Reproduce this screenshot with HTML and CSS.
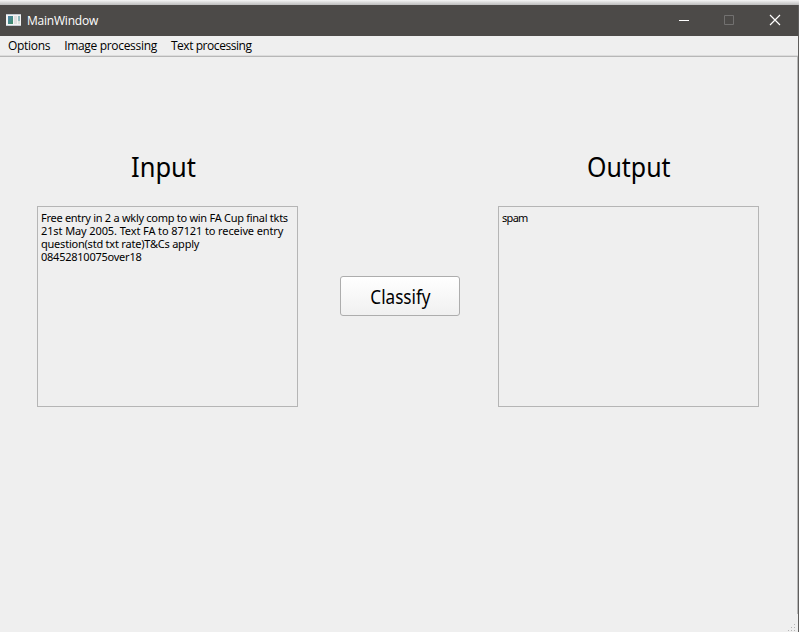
FILE: index.html
```html
<!DOCTYPE html>
<html lang="en">
<head>
<meta charset="utf-8">
<title>MainWindow</title>
<link rel="stylesheet" href="styles.css">
</head>
<body>
<div class="shadow"></div>
<div class="window">
  <header class="titlebar">
    <svg class="app-icon" width="15" height="12" viewBox="0 0 15 12">
      <defs><linearGradient id="g" x1="0" y1="0" x2="1" y2="1"><stop offset="0" stop-color="#4e86b0"/><stop offset="1" stop-color="#3d8c62"/></linearGradient></defs>
      <path fill="#f4f4f4" d="M0 0h15v12H0z"/>
      <path fill="#c3cbd2" d="M0 0h15v1H0zM0 11h15v1H0z"/>
      <path fill="url(#g)" d="M2 2h5v8H2z"/>
      <path fill="#e0e0e0" d="M8 2h3v8H8z"/>
      <path fill="#8fb9bd" d="M12 2h2v5h-2z"/>
      <path fill="#dce3dd" d="M12 7h2v3h-2z"/>
    </svg>
    <h1 class="title">MainWindow</h1>
    <div class="controls">
      <svg width="46" height="31" viewBox="0 0 46 31"><path fill="#fff" d="M18 15h10v1H18z"/></svg>
      <svg width="46" height="31" viewBox="0 0 46 31"><path fill="none" stroke="#727170" d="M17.5 10.5h9v9h-9z"/></svg>
      <svg width="46" height="31" viewBox="0 0 46 31"><path fill="none" stroke="#fff" stroke-width="1.2" d="M17 10l10 10M27 10l-10 10"/></svg>
    </div>
  </header>
  <nav class="menubar">
    <span class="m1">Options</span><span class="m2">Image processing</span><span class="m3">Text processing</span>
  </nav>
  <main class="content">
    <section class="column">
      <h2 class="input-title">Input</h2>
      <div class="box">
        <div class="l1">Free entry in 2 a wkly comp to win FA Cup final tkts</div>
        <div class="l2">21st May 2005. Text FA to 87121 to receive entry</div>
        <div class="l3">question(std txt rate)T&amp;Cs apply</div>
        <div class="l4">08452810075over18</div>
      </div>
    </section>
    <button class="classify"><span>Classify</span></button>
    <section class="column">
      <h2 class="output-title">Output</h2>
      <div class="box"><div class="l5">spam</div></div>
    </section>
    <svg class="grip" width="8" height="8" viewBox="0 0 8 8"><path fill="#b5b5b5" d="M6 0h1v1H6zM3 3h1v1H3zM6 3h1v1H6zM0 6h1v1H0zM3 6h1v1H3zM6 6h1v1H6z"/></svg>
  </main>
</div>
</body>
</html>
```
FILE: styles.css
```css
* { box-sizing: border-box; }
body {
  margin: 0;
  width: 799px;
  height: 632px;
  overflow: hidden;
  background: #efefef;
  color: #000;
  font-family: "Noto Sans", sans-serif;
}
h1, h2 { margin: 0; font-weight: 400; }
.shadow { height: 5px; background: linear-gradient(#f5f5f5, #bcbcbc); }
.window { height: 627px; display: flex; flex-direction: column; border-right: 1px solid #5f5e5d; }
.titlebar {
  height: 31px;
  flex: none;
  display: flex;
  align-items: center;
  padding-left: 6px;
  background: #4c4a48;
  color: #fff;
}
.app-icon { margin-bottom: 1px; }
.title { margin-left: 6px; font: 12px/16px "Open Sans", sans-serif; letter-spacing: -0.22px; }
.controls { margin-left: auto; margin-right: -1px; display: flex; }
.menubar {
  height: 21px;
  flex: none;
  display: flex;
  gap: 14px;
  padding-left: 8px;
  border-bottom: 1px solid #b7b7b7;
  font: 12px/20px "Open Sans", sans-serif;
  box-shadow: inset 0 -1px #dcdcdc;
  white-space: nowrap;
}
.m1 { letter-spacing: -0.3px; }
.m2 { letter-spacing: -0.32px; }
.m3 { letter-spacing: -0.44px; }
.content {
  position: relative;
  flex: 1;
  display: flex;
  align-items: flex-start;
  padding: 89px 0 0 37px;
  background: linear-gradient(#b7b7b7, #b7b7b7) right top / 1px 557px no-repeat;
}
.column { width: 261px; }
.column h2 {
  width: fit-content;
  height: 40px;
  font-size: 28px;
  line-height: 40px;
  transform-origin: left;
}
.input-title { margin-left: 94px; transform: scaleX(.91); }
.output-title { margin-left: 89px; transform: scaleX(.89); }
.box {
  height: 201px;
  margin-top: 20px;
  padding: 4px 3px;
  border: 1px solid #b5b5b5;
  font-size: 11px;
  line-height: 13px;
  white-space: nowrap;
}
.l1 { letter-spacing: -0.28px; }
.l2 { letter-spacing: -0.11px; }
.l3 { letter-spacing: -0.22px; }
.l4 { letter-spacing: -0.24px; }
.l5 { letter-spacing: -0.7px; }
.classify {
  width: 120px;
  height: 40px;
  margin: 130px 38px 0 42px;
  padding: 2px 0 0;
  border: 1px solid #adadad;
  border-radius: 3px;
  background: linear-gradient(#fff, #f0f0f0);
  color: #000;
  font: 19px/24px "Noto Sans", sans-serif;
}
.classify span { display: inline-block; transform: scaleX(.9); }
.grip { position: absolute; right: 2px; bottom: 0; }
```
